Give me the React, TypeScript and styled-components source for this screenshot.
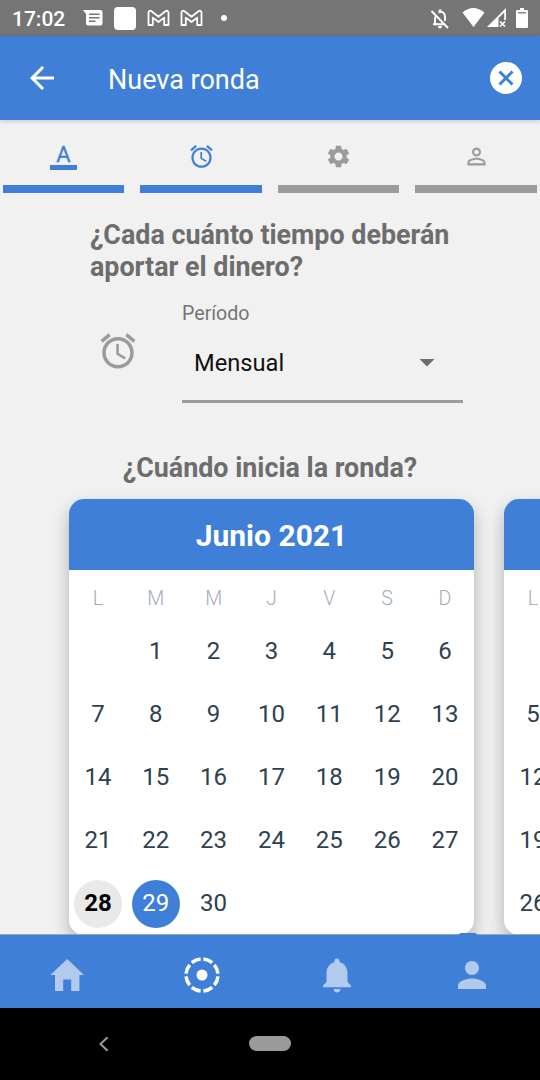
import React from "react";
import styled, { createGlobalStyle } from "styled-components";

const BLUE = "#407fd7";
const GREY = "#9b9b9b";

const Global = createGlobalStyle`
  * { box-sizing: border-box; }
  html, body { margin: 0; padding: 0; overflow: hidden; background: #f1f1f1; }
  body { font-family: Roboto, sans-serif; }
  svg { display: block; flex: none; }
`;

const Screen = styled.div`
  width: 540px;
  height: 1080px;
  display: flex;
  flex-direction: column;
  overflow: hidden;
  background: #f1f1f1;
`;

const StatusBar = styled.div`
  flex: none;
  height: 36px;
  background: #757575;
  color: #fff;
  display: flex;
  align-items: center;
  padding: 0 11px 0 12px;
`;

const Clock = styled.span`
  width: 71px;
  font-size: 21px;
  font-weight: 500;
  line-height: 36px;
  padding-top: 1px;
`;

const Notifications = styled.div`
  display: flex;
  align-items: center;
`;

const SquareBadge = styled.div`
  width: 22px;
  height: 23px;
  margin: 0 11px 0 11px;
  border-radius: 4px;
  background: #fff;
`;

const MailPair = styled.div`
  display: flex;
  gap: 10px;
`;

const Dot = styled.div`
  width: 6px;
  height: 6px;
  margin-left: 18px;
  border-radius: 50%;
  background: #fff;
`;

const Spacer = styled.div`
  flex: 1;
`;

const AppBar = styled.header`
  flex: none;
  height: 84px;
  background: ${BLUE};
  color: #fff;
  display: flex;
  align-items: center;
  padding: 0 18px 0 24px;
  box-shadow: 0 1px 5px rgba(0, 0, 0, 0.18);
  z-index: 1;
`;

const Title = styled.h1`
  flex: 1;
  margin: 4px 0 0 48px;
  font-size: 27px;
  font-weight: 400;
  line-height: 32px;
`;

const Tabs = styled.nav`
  flex: none;
  display: grid;
  grid-template-columns: 121px 122px 121px 122px;
  column-gap: 16px;
  height: 73px;
  padding: 0 3px;
`;

const Tab = styled.div<{ $on?: boolean }>`
  display: flex;
  align-items: center;
  justify-content: center;
  border-bottom: 8px solid ${(p) => (p.$on ? BLUE : GREY)};
  color: ${(p) => (p.$on ? BLUE : GREY)};
  padding-top: 7px;
`;

const LetterIcon = styled.span`
  width: 27px;
  height: 27px;
  border-bottom: 5px solid ${BLUE};
  font-size: 22px;
  line-height: 23px;
  text-align: center;
  -webkit-text-stroke: 0.3px ${BLUE};
`;

const Content = styled.main`
  flex: none;
  height: 741px;
  overflow: hidden;
`;

const Question = styled.h2`
  margin: 27px 0 0 90px;
  width: 400px;
  font-size: 26.85px;
  font-weight: 700;
  line-height: 31.5px;
  color: #6d6d6d;
`;

const StartQuestion = styled(Question)`
  margin: 49px 0 0;
  width: 540px;
  line-height: 32px;
  text-align: center;
`;

const PeriodRow = styled.div`
  display: flex;
  align-items: flex-start;
  margin-top: 17px;
  padding-left: 96.5px;
`;

const PeriodIcon = styled.div`
  width: 85.5px;
  padding-top: 30px;
  color: ${GREY};
`;

const Field = styled.div`
  width: 281px;
  height: 103px;
  border-bottom: 3px solid ${GREY};
`;

const Label = styled.div`
  font-size: 19.6px;
  line-height: 28px;
  color: #757575;
`;

const Select = styled.div`
  display: flex;
  align-items: center;
  justify-content: space-between;
  margin-top: 19px;
  padding: 0 28px 0 12px;
  font-size: 23.7px;
  line-height: 32px;
  color: #111;
`;

const Carousel = styled.div`
  display: flex;
  gap: 30px;
  margin-top: 15px;
  padding-left: 69px;
`;

const Card = styled.section`
  flex: none;
  width: 405px;
  height: 436px;
  border-radius: 15px;
  overflow: hidden;
  background: #fff;
  box-shadow: 0 8px 17px rgba(0, 0, 0, 0.27);
`;

const Month = styled.div`
  height: 71px;
  background: ${BLUE};
  color: #fff;
  font-size: 30px;
  font-weight: 700;
  line-height: 73px;
  text-align: center;
`;

const Days = styled.div<{ $columns: number }>`
  display: grid;
  grid-template-columns: repeat(${(p) => p.$columns}, 57.85px);
`;

const Weekday = styled.div`
  height: 50px;
  font-size: 19.6px;
  font-weight: 300;
  line-height: 57px;
  text-align: center;
  color: #a3aebb;
`;

const Day = styled.div<{ $kind?: "today" | "picked" }>`
  width: 48px;
  height: 48px;
  margin: 7.5px auto;
  border-radius: 50%;
  font-size: 24px;
  line-height: 47px;
  text-align: center;
  font-weight: ${(p) => (p.$kind === "today" ? 700 : 400)};
  color: ${(p) => (p.$kind === "today" ? "#000" : p.$kind === "picked" ? "#fff" : "#2d4150")};
  background: ${(p) => (p.$kind === "today" ? "#e9e9e9" : p.$kind === "picked" ? BLUE : "transparent")};
`;

const NavArea = styled.nav`
  position: relative;
  flex: none;
  height: 74px;
  border-top: 1px solid #93a5c2;
  background: ${BLUE};
  display: grid;
  grid-template-columns: repeat(4, 1fr);
`;

const NavItem = styled.div<{ $on?: boolean }>`
  display: flex;
  align-items: center;
  justify-content: center;
  padding: 7px 0.6px 0 0;
  color: ${(p) => (p.$on ? "#fff" : "#b3caef")};
`;

const FabEdge = styled.div`
  position: absolute;
  left: 459px;
  top: -2px;
  width: 18px;
  height: 2px;
  border-radius: 9px 9px 0 0;
  background: ${BLUE};
`;

const SystemBar = styled.div`
  flex: 1;
  background: #000;
  display: flex;
  align-items: center;
  padding: 0 0 1px 98px;
`;

const HomePill = styled.div`
  width: 42px;
  height: 15px;
  margin-left: 140px;
  border-radius: 8px;
  background: #9a9a9a;
`;

const AlarmIcon = ({ size }: { size: number }) => (
  <svg width={size} height={size} viewBox="0 0 24 24" fill="currentColor">
    <path d="M22 5.72l-4.6-3.86-1.29 1.53 4.6 3.86L22 5.72zM7.88 3.39L6.6 1.86 2 5.71l1.29 1.53 4.59-3.85zM12.5 8H11v6l4.75 2.85.75-1.23-4-2.37V8zM12 4c-4.97 0-9 4.03-9 9s4.02 9 9 9c4.97 0 9-4.03 9-9s-4.03-9-9-9zm0 16c-3.87 0-7-3.13-7-7s3.13-7 7-7 7 3.13 7 7-3.13 7-7 7z" />
  </svg>
);

const MailIcon = () => (
  <svg width="23" height="18" viewBox="0 0 23 18" fill="none" stroke="#fff" strokeWidth="1.8" strokeLinejoin="round">
    <path d="M1.500 16V3.600Q1.800 1 4.200 2L11.500 7.700L18.800 2Q21.200 1 21.500 3.600V16H17.200V8.600L11.500 13L5.800 8.600V16Z" />
  </svg>
);

const StatusIcons = () => (
  <Notifications>
    <svg width="20" height="16" viewBox="0 0 20 16">
      <path d="M0 0H17.5Q19.5 0 19.5 2V13.5Q19.5 15.5 17.5 15.5H5Q3 15.5 3 13.5V4Z" fill="#fff" />
      <path d="M6 4.2H16.5M6 7.7H16.5M6 11.2H12.500" stroke="#757575" strokeWidth="1.5" />
    </svg>
    <SquareBadge />
    <MailPair>
      <MailIcon />
      <MailIcon />
    </MailPair>
    <Dot />
  </Notifications>
);

const SignalIcons = () => (
  <svg width="99" height="22" viewBox="430 7 99 22" fill="#fff">
    <g fill="none" stroke="#fff" strokeWidth="1.9">
      <path d="M431.500 11L448 28" />
      <path d="M435.800 16Q435 17.500 435 19V24.200H444M438.500 12.300Q440 11.500 441.500 11.900Q445 13 445 17V21" />
      <path d="M433 24.200H437" />
    </g>
    <path d="M438.800 9.500h2.600v3h-2.600zM438 26h4q0 2.500-2 2.500t-2-2.500z" />
    <path d="M462.500 12.500Q473 3.500 484.500 12.500L473.500 27Z" />
    <path fillRule="evenodd" d="M487 27L506 8V20H504.200V12.400L498.500 18.100V27Z" />
    <path d="M500 21.500L505 26.500M505 21.500L500 26.500" stroke="#fff" strokeWidth="1.700" />
    <path d="M520 8h4v2h3q1 0 1 1v16q0 1-1 1h-10q-1 0-1-1V11q0-1 1-1h3z" />
    <path d="M518 12.800h8" stroke="#757575" strokeWidth="1.300" />
  </svg>
);

type DayCell = number | null;
const june: DayCell[] = [null, ...Array.from({ length: 30 }, (_, i) => i + 1)];
const julyMondays: DayCell[] = [null, 5, 12, 19, 26];
const weekdays = ["L", "M", "M", "J", "V", "S", "D"];

interface MonthCardProps {
  name?: string;
  days: DayCell[];
  columns?: number;
  today?: number;
  picked?: number;
}

const MonthCard = ({ name, days, columns = 7, today, picked }: MonthCardProps) => (
  <Card>
    <Month>{name}</Month>
    <Days $columns={columns}>
      {weekdays.slice(0, columns).map((d, i) => <Weekday key={"w" + i}>{d}</Weekday>)}
      {days.map((d, i) => (
        <Day key={i} $kind={d && d === today ? "today" : d && d === picked ? "picked" : undefined}>{d}</Day>
      ))}
    </Days>
  </Card>
);

export default function App() {
  return (
    <Screen>
      <Global />
      <StatusBar>
        <Clock>17:02</Clock>
        <StatusIcons />
        <Spacer />
        <SignalIcons />
      </StatusBar>
      <AppBar>
        <svg width="36" height="36" viewBox="0 0 24 24" fill="#fff">
          <path d="M20 11H7.830l5.590-5.590L12 4l-8 8 8 8 1.410-1.410L7.830 13H20v-2z" />
        </svg>
        <Title>Nueva ronda</Title>
        <svg width="32" height="32" viewBox="0 0 32 32">
          <circle cx="16" cy="16" r="16" fill="#fff" />
          <path d="M9.500 9.500L22.500 22.500M22.500 9.500L9.500 22.500" stroke={BLUE} strokeWidth="3" />
        </svg>
      </AppBar>
      <Tabs>
        <Tab $on><LetterIcon>A</LetterIcon></Tab>
        <Tab $on><AlarmIcon size={27} /></Tab>
        <Tab>
          <svg width="27" height="27" viewBox="0 0 24 24" fill="currentColor">
            <path d="M19.140 12.940c.04-.3.06-.61.06-.94 0-.32-.02-.64-.07-.94l2.030-1.580c.18-.14.23-.41.12-.61l-1.920-3.320c-.12-.22-.37-.29-.59-.22l-2.390.96c-.5-.38-1.030-.7-1.620-.94l-.36-2.540c-.04-.24-.24-.41-.48-.41h-3.840c-.24 0-.43.17-.47.41l-.36 2.540c-.59.24-1.130.57-1.620.94l-2.390-.96c-.22-.08-.47 0-.59.22L2.740 8.870c-.12.21-.08.47.12.61l2.030 1.580c-.05.3-.09.63-.09.94s.02.64.07.94l-2.030 1.580c-.18.14-.23.41-.12.61l1.920 3.320c.12.22.37.29.59.22l2.390-.96c.5.38 1.030.7 1.620.94l.36 2.540c.05.24.24.41.48.41h3.840c.24 0 .44-.17.47-.41l.36-2.540c.59-.24 1.130-.56 1.620-.94l2.390.96c.22.08.47 0 .59-.22l1.920-3.320c.12-.22.07-.47-.12-.61l-2.010-1.580zM12 15.600c-1.980 0-3.600-1.620-3.600-3.600s1.620-3.600 3.600-3.600 3.600 1.620 3.600 3.600-1.620 3.600-3.600 3.600z" />
          </svg>
        </Tab>
        <Tab>
          <svg width="27" height="27" viewBox="0 0 24 24" fill="currentColor">
            <path d="M12 5.900c1.160 0 2.100.94 2.100 2.100s-.94 2.100-2.100 2.100S9.900 9.160 9.900 8s.94-2.100 2.100-2.100m0 9c2.970 0 6.100 1.460 6.100 2.100v1.100H5.900V17c0-.64 3.130-2.100 6.100-2.100M12 4C9.790 4 8 5.790 8 8s1.790 4 4 4 4-1.790 4-4-1.790-4-4-4zm0 9c-2.670 0-8 1.340-8 4v3h16v-3c0-2.660-5.330-4-8-4z" />
          </svg>
        </Tab>
      </Tabs>
      <Content>
        <Question>¿Cada cuánto tiempo deberán aportar el dinero?</Question>
        <PeriodRow>
          <PeriodIcon><AlarmIcon size={42} /></PeriodIcon>
          <Field>
            <Label>Período</Label>
            <Select>
              Mensual
              <svg width="16" height="8" viewBox="0 0 16 8"><path d="M0.500 0H15.500L8 7.500Z" fill="#6d6d6d" /></svg>
            </Select>
          </Field>
        </PeriodRow>
        <StartQuestion>¿Cuándo inicia la ronda?</StartQuestion>
        <Carousel>
          <MonthCard name="Junio 2021" days={june} today={28} picked={29} />
          <MonthCard days={julyMondays} columns={1} />
        </Carousel>
      </Content>
      <NavArea>
        <FabEdge />
        <NavItem>
          <svg width="34" height="32" viewBox="0 0 34 32" fill="currentColor">
            <path d="M17.200 0L34 16H29.400V32H21.200V20.500H13.200V32H5V16H0.400Z" />
          </svg>
        </NavItem>
        <NavItem $on>
          <svg width="36" height="36" viewBox="0 0 36 36">
            <circle cx="18" cy="18" r="5.500" fill="currentColor" />
            <circle cx="18" cy="18" r="16" fill="none" stroke="currentColor" strokeWidth="3.500" pathLength="80" strokeDasharray="7.700 2.300" strokeDashoffset="-1.150" />
          </svg>
        </NavItem>
        <NavItem>
          <svg width="42" height="42" viewBox="0 0 24 24" fill="currentColor">
            <path d="M12 22c1.100 0 2-.9 2-2h-4c0 1.100.89 2 2 2zm6-6v-5c0-3.070-1.640-5.640-4.500-6.320V4c0-.83-.67-1.500-1.500-1.500s-1.500.67-1.500 1.500v.68C7.630 5.360 6 7.920 6 11v5l-2 2v1h16v-1l-2-2z" />
          </svg>
        </NavItem>
        <NavItem>
          <svg width="42" height="42" viewBox="0 0 24 24" fill="currentColor">
            <path d="M12 12c2.210 0 4-1.790 4-4s-1.790-4-4-4-4 1.790-4 4 1.790 4 4 4zm0 2c-2.670 0-8 1.340-8 4v2h16v-2c0-2.660-5.330-4-8-4z" />
          </svg>
        </NavItem>
      </NavArea>
      <SystemBar>
        <svg width="11" height="16" viewBox="0 0 11 16" fill="none" stroke="#9a9a9a" strokeWidth="2">
          <path d="M9.500 1.200L2.500 8L9.500 14.800" />
        </svg>
        <HomePill />
      </SystemBar>
    </Screen>
  );
}
